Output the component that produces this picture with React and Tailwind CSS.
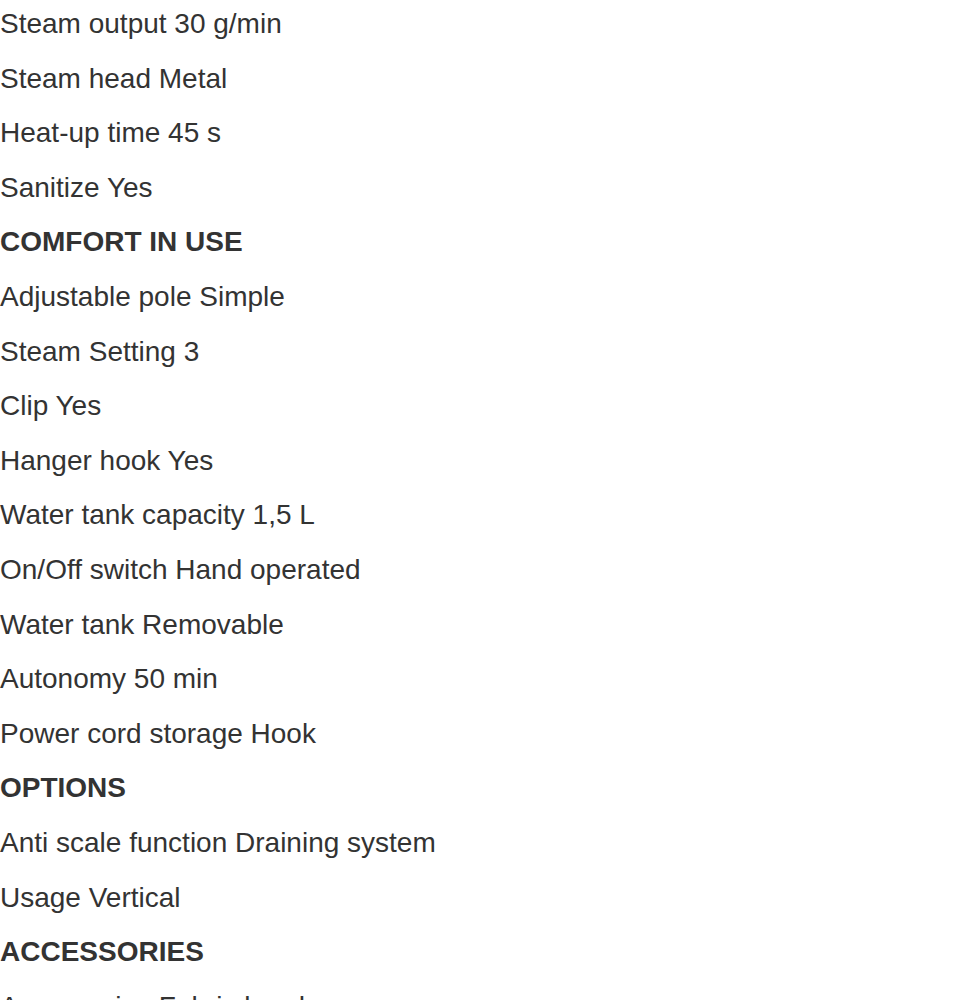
import React from 'react';

const rows = [
    { text: 'Steam output 30 g/min' },
    { text: 'Steam head Metal' },
    { text: 'Heat-up time 45 s' },
    { text: 'Sanitize Yes' },
    { text: 'COMFORT IN USE', heading: true },
    { text: 'Adjustable pole Simple' },
    { text: 'Steam Setting 3' },
    { text: 'Clip Yes' },
    { text: 'Hanger hook Yes' },
    { text: 'Water tank capacity 1,5 L' },
    { text: 'On/Off switch Hand operated' },
    { text: 'Water tank Removable' },
    { text: 'Autonomy 50 min' },
    { text: 'Power cord storage Hook' },
    { text: 'OPTIONS', heading: true },
    { text: 'Anti scale function Draining system' },
    { text: 'Usage Vertical' },
    { text: 'ACCESSORIES', heading: true },
    { text: 'Accessories Fabric brush' },
];

const App = () => {
    return (
        <div className="h-[1000px] overflow-hidden bg-white">
            <div
                className="mt-[-3px] text-[28px] leading-[54.6px] text-[#333333]"
                style={{ fontFamily: '"Liberation Sans", Arial, sans-serif' }}
            >
                {rows.map((row, index) => (
                    <p key={index} className={row.heading ? 'font-bold' : ''}>
                        {row.text}
                    </p>
                ))}
            </div>
        </div>
    );
};

export default App;
